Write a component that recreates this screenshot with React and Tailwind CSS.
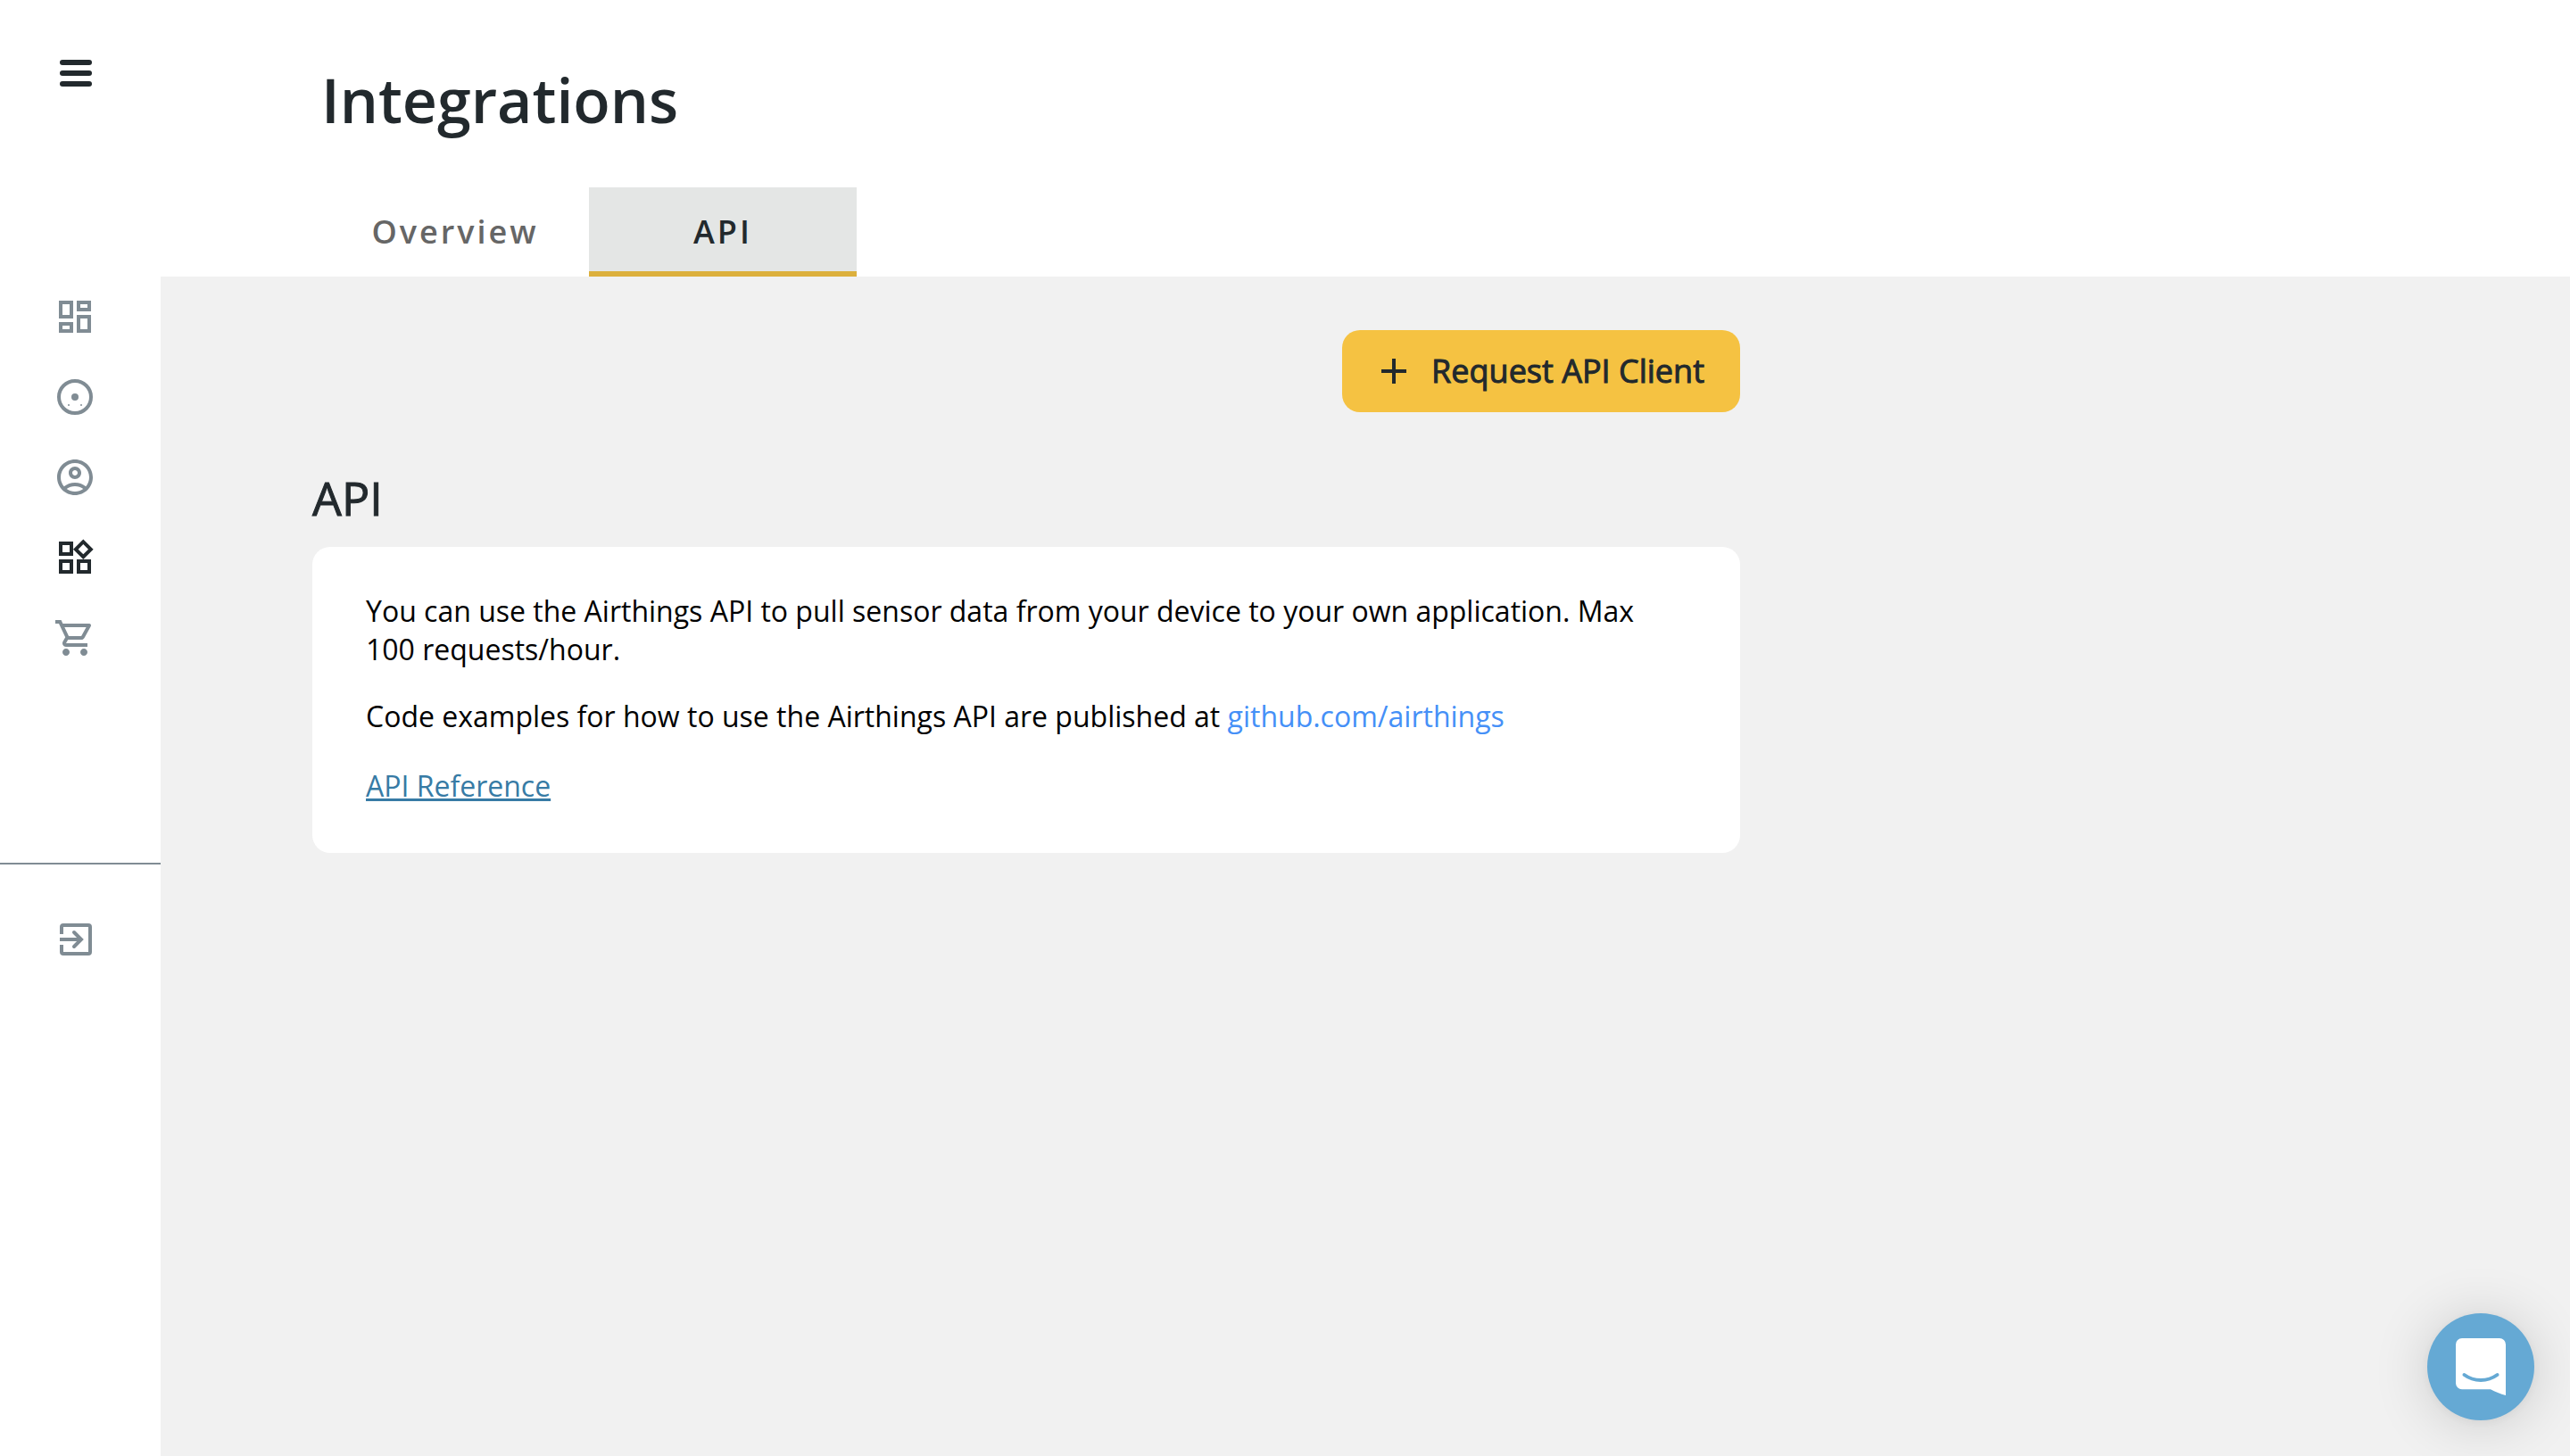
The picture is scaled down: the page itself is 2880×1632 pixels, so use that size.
import { MdOutlineDashboard, MdOutlineWidgets, MdOutlineShoppingCart, MdOutlineAccountCircle } from "react-icons/md";

function MenuIcon() {
  return (
    <svg viewBox="0 0 36 30" className="w-9" fill="#22292d" aria-hidden="true">
      <rect width="36" height="6" rx="3" />
      <rect y="12" width="36" height="6" rx="3" />
      <rect y="24" width="36" height="6" rx="3" />
    </svg>
  );
}

function DeviceIcon() {
  return (
    <svg viewBox="0 0 48 48" className="size-12" fill="none" aria-hidden="true">
      <circle cx="24" cy="24" r="18" stroke="currentColor" strokeWidth="4" />
      <circle cx="24" cy="24" r="4" fill="currentColor" />
      <circle cx="17" cy="33" r="1" fill="currentColor" />
      <circle cx="31" cy="33" r="1" fill="currentColor" />
    </svg>
  );
}

function ExitIcon() {
  return (
    <svg viewBox="0 0 48 48" className="size-12" fill="none" stroke="currentColor" strokeWidth="4" aria-hidden="true">
      <path d="M8 18V10a2 2 0 0 1 2-2h28a2 2 0 0 1 2 2v28a2 2 0 0 1-2 2H10a2 2 0 0 1-2-2v-8" />
      <path d="M6 24h24" />
      <path d="M22 16l8 8-8 8" strokeLinecap="round" />
    </svg>
  );
}

function ChatIcon() {
  return (
    <svg viewBox="0 0 56 64" className="w-14" aria-hidden="true">
      <path fill="#fff" d="M7 0h42a7 7 0 0 1 7 7v57c-6-1.500-12-4-17-6.700H7a7 7 0 0 1-7-7V7a7 7 0 0 1 7-7z" />
      <path d="M9.500 41c11 8 26 8 37 0" fill="none" stroke="#65a9d4" strokeWidth="4" strokeLinecap="round" />
    </svg>
  );
}

const navItems = [
  { label: "Dashboard", icon: <MdOutlineDashboard className="size-12" /> },
  { label: "Devices", icon: <DeviceIcon /> },
  { label: "Account", icon: <MdOutlineAccountCircle className="size-12" /> },
  { label: "Integrations", icon: <MdOutlineWidgets className="size-12" />, active: true },
  { label: "Shop", icon: <MdOutlineShoppingCart className="size-12" /> },
];

function Sidebar() {
  return (
    <nav className="flex w-[180px] shrink-0 flex-col bg-white text-[#808c94]">
      <div className="flex h-[310px] pl-[67px] pt-[67px]">
        <button aria-label="Menu" className="h-[30px]">
          <MenuIcon />
        </button>
      </div>
      <ul className="flex h-[657px] flex-col">
        {navItems.map((item) => (
          <li key={item.label} className="flex h-[90px] items-center pl-[60px]">
            <a href="#" aria-label={item.label} className={item.active ? "text-[#22292d]" : ""}>
              {item.icon}
            </a>
          </li>
        ))}
      </ul>
      <div className="border-t-2 border-[#808c94] pl-[61px] pt-[60px]">
        <button aria-label="Log out">
          <ExitIcon />
        </button>
      </div>
    </nav>
  );
}

export default function App() {
  return (
    <div className="flex min-h-screen bg-[#f1f1f1] font-['Open_Sans',sans-serif] text-[#22292d]">
      <Sidebar />
      <div className="flex grow flex-col">
        <header className="flex h-[310px] flex-col justify-between bg-white pl-[180px] pt-16">
          <h1 className="text-[68px] leading-[96px] font-semibold">Integrations</h1>
          <div role="tablist" className="flex text-4xl font-semibold tracking-[3px]">
            <button role="tab" aria-selected="false" className="h-[100px] w-[300px] text-[#666666]">
              Overview
            </button>
            <button role="tab" aria-selected="true" className="h-[100px] w-[300px] border-b-6 border-[#dcb03d] bg-[#e4e6e5] pt-[6px]">
              API
            </button>
          </div>
        </header>
        <main className="ml-[170px] mt-[60px] flex w-full max-w-[1600px] flex-col">
          <button className="flex h-[92px] items-center gap-7 self-end rounded-[20px] bg-[#f5c242] pl-11 pr-10 text-4xl [-webkit-text-stroke:1px_currentColor]">
            <svg viewBox="0 0 28 28" className="size-7" stroke="currentColor" strokeWidth="4" aria-hidden="true">
              <path d="M14 0v28M0 14h28" />
            </svg>
            Request API Client
          </button>
          <h2 className="mt-[60px] text-[52px] leading-[71px] font-normal [-webkit-text-stroke:1px_currentColor]">API</h2>
          <section className="mt-5 rounded-[20px] bg-white px-[60px] pb-[54px] pt-[50px] text-[32px] leading-[43px] text-black">
            <p>
              You can use the Airthings API to pull sensor data from your device to your own application. Max 100
              requests/hour.
            </p>
            <p className="mt-8">
              Code examples for how to use the Airthings API are published at{" "}
              <a href="#" className="text-[#4590f7]">github.com/airthings</a>
            </p>
            <p className="mt-[35px]">
              <a href="#" className="text-[#377ba5] underline decoration-[3px] underline-offset-2">API Reference</a>
            </p>
          </section>
        </main>
      </div>
      <button
        aria-label="Open chat"
        className="fixed bottom-10 right-10 flex size-[120px] items-center justify-center rounded-full bg-[#65a9d4] shadow-[0_4px_64px_rgba(0,0,0,0.16),0_2px_12px_rgba(0,0,0,0.06)]"
      >
        <ChatIcon />
      </button>
    </div>
  );
}
